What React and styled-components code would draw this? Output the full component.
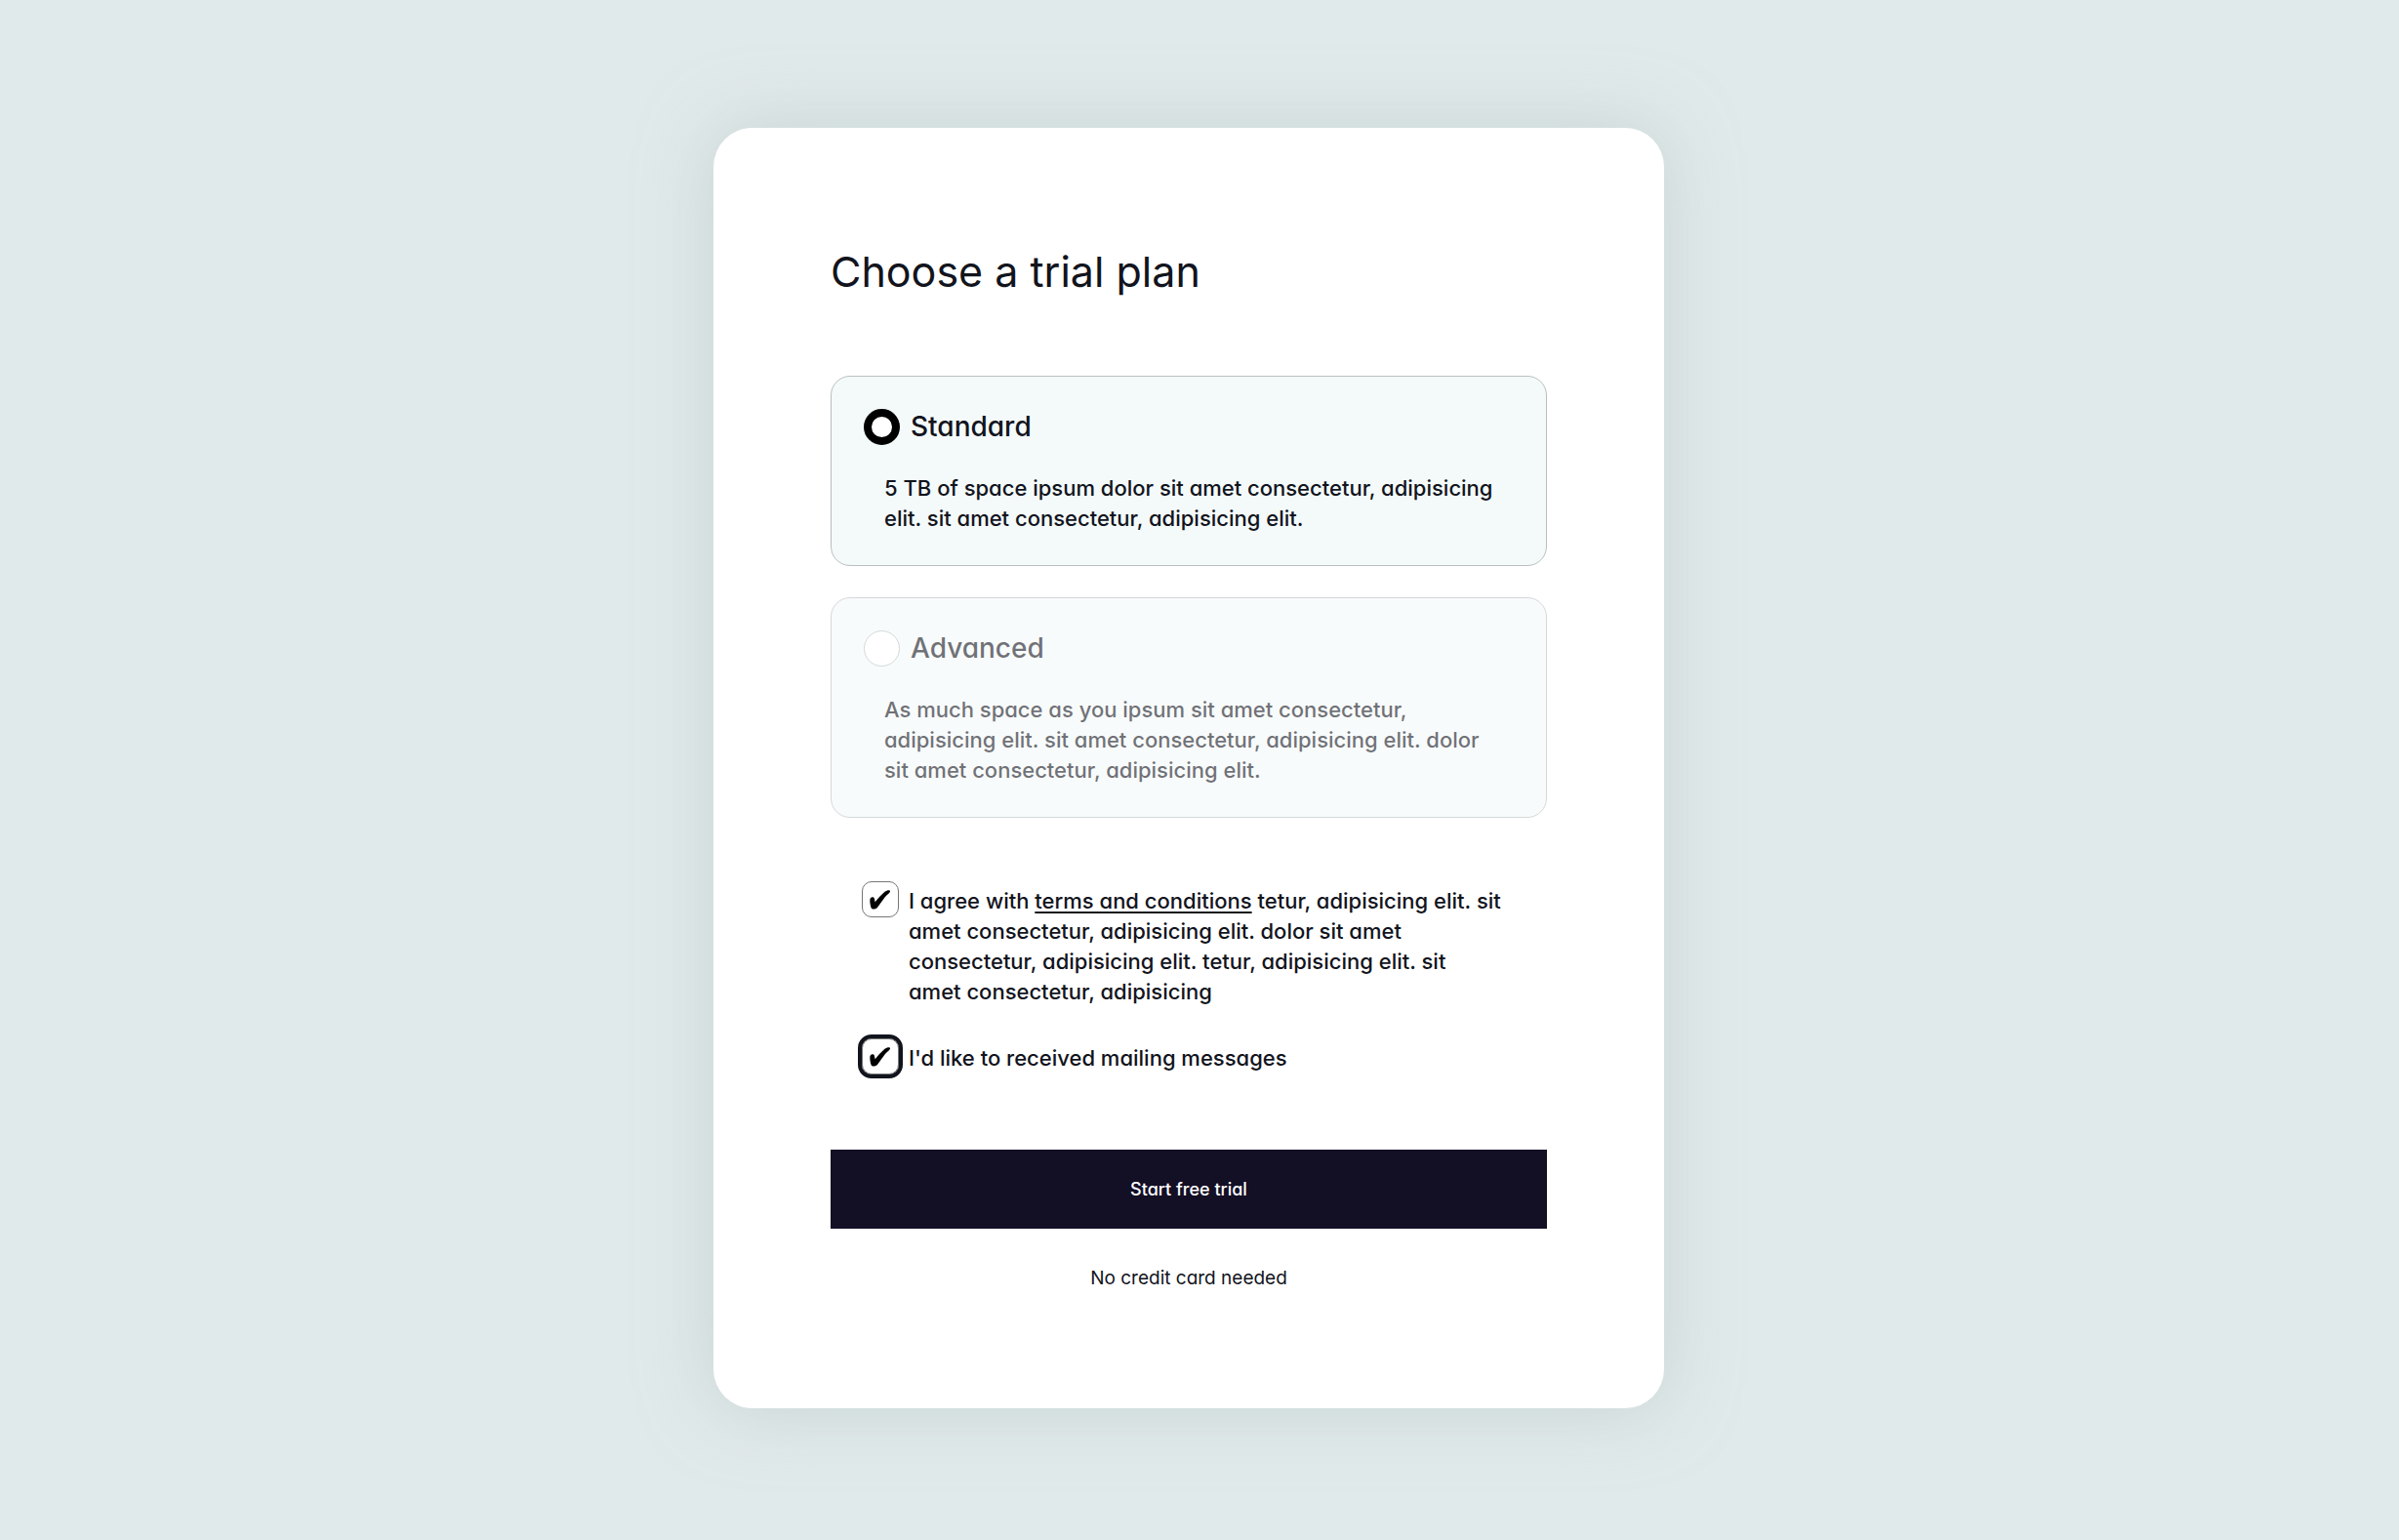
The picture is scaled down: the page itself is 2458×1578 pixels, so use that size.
import React, { useState } from "react";
import styled, { createGlobalStyle } from "styled-components";

const GlobalStyle = createGlobalStyle`
  *, *::before, *::after { box-sizing: border-box; }
  body {
    margin: 0;
    background: #e1eaeb;
    color: #12141d;
    font-family: Inter, "Open Sans", sans-serif;
    font-feature-settings: "cv11";
  }
`;

const Page = styled.main`
  min-height: 100vh;
  display: flex;
  align-items: center;
  justify-content: center;
  padding: 64px 22px 68px 0;
`;

const Card = styled.form`
  width: 100%;
  max-width: 974px;
  padding: 120px;
  border-radius: 40px;
  background: #fff;
  box-shadow: 0 0 72px rgba(176, 190, 190, 0.5);
`;

const Title = styled.h1`
  margin: 0 0 80px;
  font-size: 43px;
  line-height: 54px;
  font-weight: 400;
  font-feature-settings: normal;
`;

const Plans = styled.fieldset`
  display: flex;
  flex-direction: column;
  gap: 32px;
  margin: 0;
  padding: 0;
  border: 0;
`;

const Plan = styled.label`
  display: block;
  padding: 32px 44px 32px 33px;
  border: 1px solid #b9bfc0;
  border-radius: 20px;
  background: #f4fafa;
  opacity: ${(p) => (p.$active ? 1 : 0.6)};
  cursor: pointer;
`;

const PlanHead = styled.span`
  display: flex;
  align-items: center;
  gap: 11px;
`;

const Radio = styled.input`
  appearance: none;
  flex: none;
  width: 37px;
  height: 37px;
  margin: 0;
  border: 1px solid #b9bfc0;
  border-radius: 50%;
  background: #fff;
  outline: none;

  &:checked { border: 8px solid #000; }
`;

const PlanName = styled.span`
  font-size: 28px;
  line-height: 38px;
  font-weight: 500;
`;

const PlanText = styled.span`
  display: block;
  margin-top: 29px;
  padding-left: 21px;
  font-size: 22px;
  line-height: 31px;
  font-weight: 500;
`;

const Consents = styled.div`
  display: flex;
  flex-direction: column;
  gap: 32px;
  margin: 65px 0 77px;
  padding: 0 32px;
`;

const Consent = styled.div`
  display: flex;
  align-items: flex-start;
  gap: 10px;
`;

const Tick = styled.span`
  display: grid;
  flex: none;
  place-items: center;

  > * { grid-area: 1 / 1; }
  svg { pointer-events: none; }
`;

const Checkbox = styled.input`
  appearance: none;
  width: 38px;
  height: 37px;
  margin: 0;
  border: 1px solid #767676;
  border-radius: 10px;
  background: #fff;
  outline: ${(p) => (p.$ring ? "4px solid #12141d" : "none")};
`;

const ConsentText = styled.label`
  padding-top: 5px;
  font-size: 22px;
  line-height: 31px;
  font-weight: 500;
`;

const TermsLink = styled.a`
  color: inherit;
  text-decoration: underline;
  text-decoration-thickness: 2px;
  text-underline-offset: 3px;
`;

const Submit = styled.button`
  display: block;
  width: 100%;
  padding: 25px;
  border: 0;
  background: #130f25;
  color: #fff;
  font: inherit;
  font-size: 18px;
  line-height: 31px;
  font-weight: 500;
  cursor: pointer;
`;

const Note = styled.p`
  margin: 37px 0 0;
  font-size: 19px;
  line-height: 27px;
  text-align: center;
`;

const plans = [
  {
    id: "standard",
    name: "Standard",
    text: "5 TB of space ipsum dolor sit amet consectetur, adipisicing elit. sit amet consectetur, adipisicing elit.",
  },
  {
    id: "advanced",
    name: "Advanced",
    text: "As much space as you ipsum sit amet consectetur, adipisicing elit. sit amet consectetur, adipisicing elit. dolor sit amet consectetur, adipisicing elit.",
  },
];

function CheckField({ id, ring, children }) {
  const [checked, setChecked] = useState(true);
  return (
    <Consent>
      <Tick>
        <Checkbox
          id={id}
          type="checkbox"
          checked={checked}
          $ring={ring}
          onChange={(e) => setChecked(e.target.checked)}
        />
        {checked && (
          <svg width="22" height="20" viewBox="0 0 22 20" aria-hidden="true">
            <path d="M0.3 10.5C0.3 8.500 1.600 7.300 3 7.300C5.200 7.300 4.900 9.500 5.700 12.300C8.500 8.700 12 4.800 15.500 1.800C17.500 0.200 21.300 -0.600 21 1.500C20.800 3 17.500 5 15 8.300C12.500 11.500 10.500 14.500 8.300 17.400C6.500 19.800 2.600 20 1.700 18.400C0.900 16.500 0.300 13.500 0.300 10.500Z" />
          </svg>
        )}
      </Tick>
      <ConsentText htmlFor={id}>{children}</ConsentText>
    </Consent>
  );
}

export default function App() {
  const [plan, setPlan] = useState("standard");
  return (
    <>
      <GlobalStyle />
      <Page>
        <Card onSubmit={(e) => e.preventDefault()}>
          <Title>Choose a trial plan</Title>
          <Plans aria-label="Trial plan">
            {plans.map(({ id, name, text }) => (
              <Plan key={id} htmlFor={id} $active={plan === id}>
                <PlanHead>
                  <Radio
                    id={id}
                    type="radio"
                    name="plan"
                    checked={plan === id}
                    onChange={() => setPlan(id)}
                  />
                  <PlanName>{name}</PlanName>
                </PlanHead>
                <PlanText>{text}</PlanText>
              </Plan>
            ))}
          </Plans>
          <Consents>
            <CheckField id="terms">
              I agree with <TermsLink href="#terms">terms and conditions</TermsLink> tetur,
              adipisicing elit. sit amet consectetur, adipisicing elit. dolor sit amet
              consectetur, adipisicing elit. tetur, adipisicing elit. sit amet&nbsp;consectetur,
              adipisicing
            </CheckField>
            <CheckField id="mailing" ring>
              I'd like to received mailing messages
            </CheckField>
          </Consents>
          <Submit type="submit">Start free trial</Submit>
          <Note>No credit card needed</Note>
        </Card>
      </Page>
    </>
  );
}
